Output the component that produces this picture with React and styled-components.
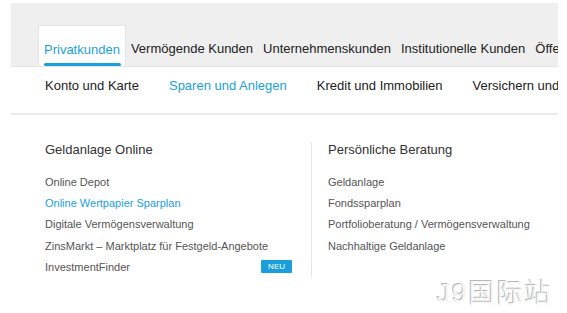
import styled, { createGlobalStyle } from 'styled-components'

const GlobalStyle = createGlobalStyle`
  body {
    margin: 0;
    background: #fff;
    font-family: 'Liberation Sans', Arial, sans-serif;
  }
`

const mainNav = [
  'Privatkunden',
  'Vermögende Kunden',
  'Unternehmenskunden',
  'Institutionelle Kunden',
  'Öffentliche Kunden',
]

const subNav = [
  'Konto und Karte',
  'Sparen und Anlegen',
  'Kredit und Immobilien',
  'Versichern und Vorsorgen',
]

const columns = [
  {
    title: 'Geldanlage Online',
    links: [
      { label: 'Online Depot' },
      { label: 'Online Wertpapier Sparplan', active: true },
      { label: 'Digitale Vermögensverwaltung' },
      { label: 'ZinsMarkt – Marktplatz für Festgeld-Angebote' },
      { label: 'InvestmentFinder', badge: 'NEU' },
    ],
  },
  {
    title: 'Persönliche Beratung',
    links: [
      { label: 'Geldanlage' },
      { label: 'Fondssparplan' },
      { label: 'Portfolioberatung / Vermögensverwaltung' },
      { label: 'Nachhaltige Geldanlage' },
    ],
  },
]

const App = () => {
  return (
    <>
      <GlobalStyle />
      <Page>
        <TopBar>
          {mainNav.map((item, i) => (
            <Tab key={item} active={i === 0}>
              {item}
            </Tab>
          ))}
        </TopBar>
        <SubBar>
          {subNav.map((item, i) => (
            <SubItem key={item} active={i === 1}>
              {item}
            </SubItem>
          ))}
        </SubBar>
        <Flyout>
          {columns.map((col, i) => (
            <Column key={col.title} divided={i > 0}>
              <Heading>{col.title}</Heading>
              {col.links.map((link) => (
                <LinkRow key={link.label}>
                  <Link active={link.active}>{link.label}</Link>
                  {link.badge && <Badge>{link.badge}</Badge>}
                </LinkRow>
              ))}
            </Column>
          ))}
        </Flyout>
      </Page>
      <Watermark>J9国际站</Watermark>
    </>
  )
}

const Page = styled.div`
  margin: 3px 0 0 11px;
  width: 547px;
  overflow: hidden;
`

const TopBar = styled.nav`
  display: flex;
  align-items: flex-end;
  height: 64px;
  padding-left: 27px;
  background: #efefef;
  border-bottom: 1px solid #e4e4e4;
  box-sizing: border-box;
  white-space: nowrap;
  overflow: hidden;
`

const Tab = styled.a`
  position: relative;
  flex-shrink: 0;
  height: 42px;
  padding: 16px 5px 0;
  margin-bottom: -1px;
  box-sizing: border-box;
  font-size: 13px;
  line-height: 16px;
  color: ${(props) => (props.active ? '#1a9fdc' : '#222')};
  background: ${(props) => (props.active ? '#fff' : 'transparent')};
  border: 1px solid ${(props) => (props.active ? '#e4e4e4' : 'transparent')};
  border-width: ${(props) => (props.active ? '1px 1px 0 1px' : '0')};
  ${(props) =>
    props.active &&
    `&::after {
      content: '';
      position: absolute;
      left: 5px;
      right: 4px;
      bottom: 1px;
      height: 3px;
      border-radius: 2px;
      background: #1a9fdc;
    }`}
`

const SubBar = styled.div`
  display: flex;
  gap: 30px;
  padding: 11px 0 0 34px;
  height: 48px;
  box-sizing: border-box;
  white-space: nowrap;
  overflow: hidden;
  border-bottom: 2px solid #ececec;
`

const SubItem = styled.a`
  flex-shrink: 0;
  font-size: 13px;
  line-height: 16px;
  color: ${(props) => (props.active ? '#1a9fdc' : '#222')};
`

const Flyout = styled.div`
  display: flex;
  padding: 27px 0 0 34px;
`

const Column = styled.div`
  width: ${(props) => (props.divided ? 'auto' : '247px')};
  padding-right: ${(props) => (props.divided ? '0' : '19px')};
  ${(props) =>
    props.divided && `border-left: 1px solid #e6e6e6; padding-left: 16px; flex: 1;`}
`

const Heading = styled.h3`
  margin: 0 0 13px;
  font-size: 13px;
  font-weight: normal;
  line-height: 16px;
  color: #333;
`

const LinkRow = styled.div`
  display: flex;
  align-items: center;
  justify-content: space-between;
  height: 21.3px;
`

const Link = styled.a`
  font-size: 11px;
  line-height: 14px;
  color: ${(props) => (props.active ? '#1a9fdc' : '#555')};
  white-space: nowrap;
`

const Badge = styled.span`
  background: #1a9fdc;
  color: #fff;
  font-size: 8px;
  line-height: 13px;
  padding: 0 7px;
  border-radius: 1px;
`

const Watermark = styled.div`
  position: absolute;
  left: 437px;
  top: 272px;
  font-family: 'Liberation Sans', 'Noto Sans CJK SC', sans-serif;
  font-size: 26px;
  font-weight: 300;
  letter-spacing: 2px;
  color: #f6f6f6;
  text-shadow: -1px -1px 0 #b8b8b8, 1px 1px 0 #fff, 0 0 1px #999;
`

export default App
